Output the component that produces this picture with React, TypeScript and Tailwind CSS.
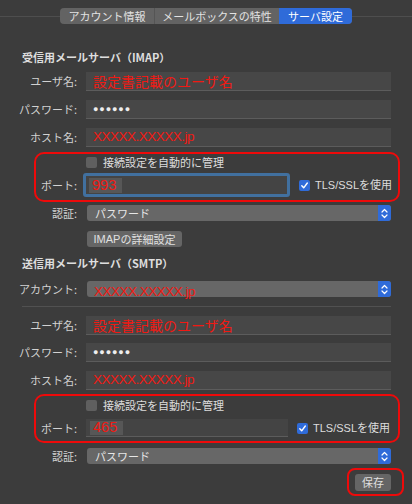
import React from "react";

const jp = { fontFamily: '"Noto Sans CJK JP", "Liberation Sans", sans-serif' };
const lat = { fontFamily: '"Liberation Sans", "Noto Sans CJK JP", sans-serif' };

function Label({ children }: { children: React.ReactNode }) {
  return (
    <div className="w-[78px] shrink-0 pr-[1px] text-right text-[11px] leading-none text-[#d2d2d2]">
      {children}
    </div>
  );
}

function TextField({ children }: { children?: React.ReactNode }) {
  return (
    <div className="ml-[8px] flex h-[19px] w-[305px] items-center border-b border-[#5c5c5c] bg-[#474747] pl-[7px]">
      {children}
    </div>
  );
}

function RedText({ children, latin }: { children: React.ReactNode; latin?: boolean }) {
  return (
    <span
      className={
        latin
          ? "text-[13.5px] leading-none tracking-[-0.5px] text-[#f01a14]"
          : "text-[14px] leading-none text-[#f01a14]"
      }
      style={latin ? lat : jp}
    >
      {children}
    </span>
  );
}

function PortText({ children }: { children: React.ReactNode }) {
  return (
    <span className="text-[14.5px] leading-none text-[#f01a14]" style={lat}>
      {children}
    </span>
  );
}

function Stepper() {
  return (
    <div className="flex h-full w-[13px] items-center justify-center rounded-r-[3px] bg-[#2f6bd9]">
      <svg width="7" height="11" viewBox="0 0 7 11" fill="none">
        <path d="M1 4 L3.5 1.5 L6 4" stroke="white" strokeWidth="1.2" strokeLinecap="round" strokeLinejoin="round" />
        <path d="M1 7 L3.5 9.5 L6 7" stroke="white" strokeWidth="1.2" strokeLinecap="round" strokeLinejoin="round" />
      </svg>
    </div>
  );
}

function Select({ children }: { children: React.ReactNode }) {
  return (
    <div className="ml-[9px] flex h-[16px] w-[304px] items-center rounded-[3px] bg-[#676767]">
      <div className="flex-1 pl-[8px] text-[11px] leading-none text-[#e6e6e6]">{children}</div>
      <Stepper />
    </div>
  );
}

function CheckRow() {
  return (
    <div className="flex h-[12px] items-center">
      <div className="ml-[86px] h-[11px] w-[11px] rounded-[2px] bg-[#5f5f5f]" />
      <span className="ml-[6px] text-[11px] leading-none text-[#dcdcdc]">接続設定を自動的に管理</span>
    </div>
  );
}

function TlsCheck() {
  return (
    <div className="ml-[9px] flex items-center">
      <div className="flex h-[11px] w-[11px] items-center justify-center rounded-[2px] bg-[#2f6bd9]">
        <svg width="9" height="9" viewBox="0 0 9 9" fill="none">
          <path d="M1.8 4.8 L3.7 6.8 L7.3 2" stroke="white" strokeWidth="1.4" strokeLinecap="round" strokeLinejoin="round" />
        </svg>
      </div>
      <span className="ml-[5px] text-[11px] leading-none text-[#dcdcdc]" style={lat}>
        TLS/SSL<span style={jp}>を使用</span>
      </span>
    </div>
  );
}

function Dots() {
  return (
    <span className="text-[9px] leading-none tracking-[0.9px] text-[#eeeeee]" style={lat}>
      ●●●●●●
    </span>
  );
}

export default function App() {
  return (
    <div className="h-[504px] w-[412px] overflow-hidden bg-[#3c3c3c]" style={jp}>
      {/* tabs */}
      <div className="flex items-center pt-[8px]">
        <div className="h-px flex-1 bg-[#4e4e4e]" />
        <div className="flex h-[16px] overflow-hidden rounded-[4px] bg-[#636363] text-[11px] leading-none text-[#e2e2e2]">
          <div className="flex w-[95px] items-center justify-center border-r border-[#555]">アカウント情報</div>
          <div className="flex w-[124px] items-center justify-center">メールボックスの特性</div>
          <div className="flex w-[73px] items-center justify-center bg-[#2f6bd9] text-white">サーバ設定</div>
        </div>
        <div className="h-px flex-1 bg-[#4e4e4e]" />
      </div>

      {/* IMAP */}
      <div className="mt-[26px] flex h-[14px] items-center pl-[22px] text-[11px] font-bold leading-none text-[#dedede]">
        受信用メールサーバ（IMAP）
      </div>

      <div className="mt-[8px] flex items-center">
        <Label>ユーザ名:</Label>
        <TextField>
          <RedText>設定書記載のユーザ名</RedText>
        </TextField>
      </div>
      <div className="mt-[9px] flex items-center">
        <Label>パスワード:</Label>
        <TextField>
          <Dots />
        </TextField>
      </div>
      <div className="mt-[9px] flex items-center">
        <Label>ホスト名:</Label>
        <TextField>
          <RedText latin>XXXXX.XXXXX.jp</RedText>
        </TextField>
      </div>

      <div className="relative mt-[9px]">
        <CheckRow />
        <div className="mt-[5px] flex h-[24px] items-center">
          <Label>ポート:</Label>
          <div className="ml-[5px] flex h-[24px] w-[207px] items-center rounded-[3px] border-[3px] border-[#41709f] bg-[#444444] pl-[3px]">
            <div className="flex h-[15px] w-[33px] items-center bg-[#575757] pl-[3px]">
              <PortText>993</PortText>
            </div>
          </div>
          <TlsCheck />
        </div>
        <div className="pointer-events-none absolute bottom-[-5px] left-[34px] right-[12px] top-[-4px] rounded-[10px] border-2 border-[#ee0a0a]" />
      </div>

      <div className="mt-[8px] flex items-center">
        <Label>認証:</Label>
        <Select>パスワード</Select>
      </div>
      <div className="ml-[87px] mt-[10px] flex h-[16px] w-[95px] items-center justify-center rounded-[3px] bg-[#656565] text-[11px] leading-none text-[#e0e0e0]">
        <span style={lat}>IMAP</span>の詳細設定
      </div>

      {/* SMTP */}
      <div className="mt-[9px] flex h-[14px] items-center pl-[22px] text-[11px] font-bold leading-none text-[#dedede]">
        送信用メールサーバ（SMTP）
      </div>
      <div className="mt-[11px] flex items-center">
        <Label>アカウント:</Label>
        <div className="ml-[9px] flex h-[16px] w-[304px] items-center rounded-[3px] bg-[#676767]">
          <div className="flex-1 pl-[7px]">
            <RedText latin>XXXXX.XXXXX.jp</RedText>
          </div>
          <Stepper />
        </div>
      </div>
      <div className="ml-[22px] mt-[9px] h-px w-[369px] bg-[#515151]" />

      <div className="mt-[9px] flex items-center">
        <Label>ユーザ名:</Label>
        <TextField>
          <RedText>設定書記載のユーザ名</RedText>
        </TextField>
      </div>
      <div className="mt-[8px] flex items-center">
        <Label>パスワード:</Label>
        <TextField>
          <Dots />
        </TextField>
      </div>
      <div className="mt-[9px] flex items-center">
        <Label>ホスト名:</Label>
        <TextField>
          <RedText latin>XXXXX.XXXXX.jp</RedText>
        </TextField>
      </div>

      <div className="relative mt-[9px]">
        <CheckRow />
        <div className="mt-[8px] flex h-[18px] items-center">
          <Label>ポート:</Label>
          <div className="ml-[8px] flex h-[18px] w-[202px] items-center border-b border-[#5c5c5c] bg-[#444444] pl-[4px]">
            <div className="flex h-[14px] w-[33px] items-center bg-[#575757] pl-[3px]">
              <PortText>465</PortText>
            </div>
          </div>
          <TlsCheck />
        </div>
        <div className="pointer-events-none absolute bottom-[-6px] left-[34px] right-[12px] top-[-5px] rounded-[10px] border-2 border-[#ee0a0a]" />
      </div>

      <div className="mt-[11px] flex items-center">
        <Label>認証:</Label>
        <Select>パスワード</Select>
      </div>

      <div className="mt-[10px] flex justify-end pr-[21px]">
        <div className="relative">
          <div className="flex h-[17px] w-[36px] items-center justify-center rounded-[3px] bg-[#656565] text-[11px] leading-none text-[#e0e0e0]">
            保存
          </div>
          <div className="pointer-events-none absolute bottom-[-5px] left-[-8px] right-[-13px] top-[-6px] rounded-[8px] border-2 border-[#ee0a0a]" />
        </div>
      </div>
    </div>
  );
}
